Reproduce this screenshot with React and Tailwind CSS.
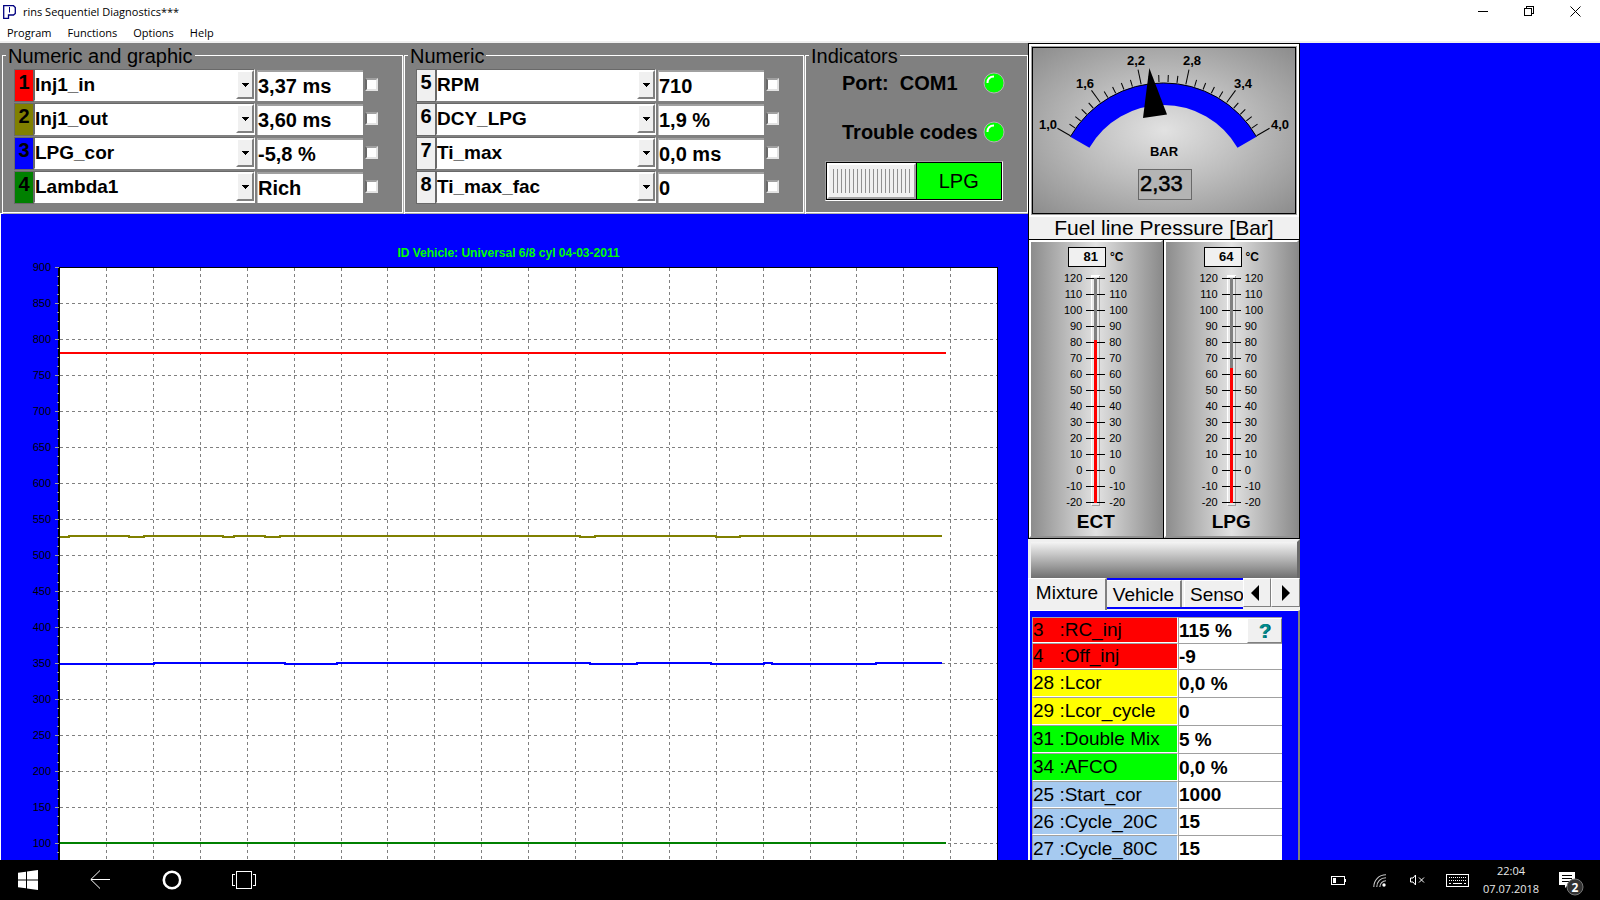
import React from "react";

const graphic = [
  { n: 1, name: "Inj1_in", value: "3,37 ms", color: "bg-[#ff0000]" },
  { n: 2, name: "Inj1_out", value: "3,60 ms", color: "bg-[#808000]" },
  { n: 3, name: "LPG_cor", value: "-5,8 %", color: "bg-[#0000ff]" },
  { n: 4, name: "Lambda1", value: "Rich", color: "bg-[#008000]" },
];

const numeric = [
  { n: 5, name: "RPM", value: "710", color: "bg-[#f0f0f0]" },
  { n: 6, name: "DCY_LPG", value: "1,9 %", color: "bg-[#f0f0f0]" },
  { n: 7, name: "Ti_max", value: "0,0 ms", color: "bg-[#f0f0f0]" },
  { n: 8, name: "Ti_max_fac", value: "0", color: "bg-[#f0f0f0]" },
];

const red = "bg-[#ff0000] h-[26px] border-l-[#a0a0a0]";
const yellow = "bg-[#ffff00] h-[28px] border-l-[#ffff00]";
const green = "bg-[#00ff00] h-[28px] border-l-[#00ff00]";
const sky = "bg-[#a6caf0] h-[27px] border-l-[#a0a0a0]";

const mixture = [
  { id: "3", name: "RC_inj", value: "115 %", tone: red, help: true },
  { id: "4", name: "Off_inj", value: "-9", tone: red },
  { id: "28", name: "Lcor", value: "0,0 %", tone: yellow },
  { id: "29", name: "Lcor_cycle", value: "0", tone: yellow },
  { id: "31", name: "Double Mix", value: "5 %", tone: green },
  { id: "34", name: "AFCO", value: "0,0 %", tone: green },
  { id: "25", name: "Start_cor", value: "1000", tone: sky },
  { id: "26", name: "Cycle_20C", value: "15", tone: sky },
  { id: "27", name: "Cycle_80C", value: "15", tone: sky },
];

const raised = "border border-t-white border-l-white border-r-[#808080] border-b-[#808080]";

function TitleBar() {
  return (
    <header className="flex h-[23px] shrink-0 items-center bg-white">
      <svg className="ml-[3px] h-[14px] w-[13px]" viewBox="0 0 13 14" fill="none" stroke="#000080">
        <path d="M.7 13.3V.7H10.5L12.3 2.500V8.500L10.5 10H5.500V13.300Z" fill="#fff" strokeWidth="1.3" />
        <path d="M6.500 2V7.500" strokeWidth="1" />
      </svg>
      <h1 className="ml-[7px] text-[11px] leading-4">rins Sequentiel Diagnostics***</h1>
      <div className="mr-[2px] ml-auto flex">
        <button aria-label="Minimize" className="flex h-[21px] w-[45px] items-center justify-center">
          <svg className="size-[11px]" viewBox="0 0 11 11" stroke="#000" shapeRendering="crispEdges"><path d="M0 5.5H10" /></svg>
        </button>
        <button aria-label="Restore" className="flex h-[21px] w-[46px] items-center justify-center">
          <svg className="size-[11px]" viewBox="0 0 11 11" fill="none" stroke="#000" shapeRendering="crispEdges"><path d="M.5 2.5H7.5V9.5H.5ZM2.5 2.5V.5H9.5V7.5H7.5" /></svg>
        </button>
        <button aria-label="Close" className="flex h-[21px] w-[46px] items-center justify-center">
          <svg className="size-[11px]" viewBox="0 0 11 11" stroke="#000"><path d="M.5 .5L10.5 10.5M10.5 .5L.5 10.5" /></svg>
        </button>
      </div>
    </header>
  );
}

function Channel({ row }) {
  const id = "channel-" + row.n;
  return (
    <div className="flex h-[34px] items-start text-black">
      <label htmlFor={id} className={"h-[33px] w-5 shrink-0 border border-[#696969] text-center text-xl leading-6 font-bold " + row.color}>
        {row.n}
      </label>
      <div className="relative h-8 min-w-0 flex-1 border border-t-[#696969] border-l-[#696969] border-r-white border-b-white bg-white">
        <select id={id} className="block h-[29px] w-full appearance-none bg-white text-[19px] leading-7 font-bold outline-none">
          <option>{row.name}</option>
        </select>
        <span className="pointer-events-none absolute top-0 right-0 flex h-[29px] w-[18px] items-center justify-center border-2 border-t-white border-l-white border-r-[#808080] border-b-[#808080] bg-[#f0f0f0]">
          <svg className="h-1 w-[7px]" viewBox="0 0 7 4" shapeRendering="crispEdges"><path d="M0 0H7L3.5 4Z" /></svg>
        </span>
      </div>
      <input aria-label={row.name + " value"} defaultValue={row.value} className="mt-[1px] ml-[2px] h-[31px] w-[106px] shrink-0 border-t-2 border-l border-t-[#a0a0a0] border-l-[#c0c0c0] bg-white text-xl leading-6 font-bold outline-none" />
      <input type="checkbox" aria-label={"Select " + row.name} className="mt-[9px] ml-[2px] size-[13px] shrink-0 appearance-none border-2 border-t-[#a0a0a0] border-l-[#696969] border-r-[#e3e3e3] border-b-[#e3e3e3] bg-white" />
    </div>
  );
}

const group = "min-w-0 border border-white pb-[6px] shadow-[1px_1px_0_#b0b0b0]";

function ChannelGroup({ title, rows }) {
  return (
    <fieldset className={group + " pr-6 pl-[11px]"}>
      <legend className="-ml-2 px-[2px] pt-px text-xl leading-6">{title}</legend>
      <div className="pt-px">
        {rows.map((r) => (
          <Channel key={r.n} row={r} />
        ))}
      </div>
    </fieldset>
  );
}

function Led() {
  return (
    <svg className="-mr-[2px] size-[22px] shrink-0" viewBox="0 0 22 22">
      <circle cx="11" cy="11" r="10" fill="#00ff00" stroke="#b4b4b4" />
      <path d="M4.5 11C4.5 7 7 4.5 11 4.5" fill="none" stroke="#fff" strokeWidth="2" />
    </svg>
  );
}

function Indicators() {
  return (
    <fieldset className={group + " pr-6 pl-[19px]"}>
      <legend className="-ml-4 px-[2px] pt-px text-xl leading-6">Indicators</legend>
      <div className="mt-px flex h-7 items-center justify-between pl-[17px] text-xl font-bold">
        <span className="whitespace-pre">Port:  COM1</span>
        <Led />
      </div>
      <div className="mt-[21px] flex h-7 items-center justify-between pl-[17px] text-xl font-bold">
        <span>Trouble codes</span>
        <Led />
      </div>
      <button aria-label="Fuel: LPG" className="mt-[15px] flex h-10 w-full border border-t-[#a0a0a0] border-l-[#a0a0a0] border-r-white border-b-white bg-black p-px text-xl">
        <span className="flex h-full flex-1 items-center justify-center border-2 border-t-white border-l-white border-r-[#a0a0a0] border-b-[#a0a0a0] bg-[#f0f0f0]">
          <svg className="h-6 w-[78px]" viewBox="0 0 78 24" shapeRendering="crispEdges">
            {Array.from({ length: 20 }, (_, i) => (
              <rect key={i} x={1 + i * 4} y="0" width="1" height="24" fill="#909090" />
            ))}
          </svg>
        </span>
        <span className="ml-px flex h-full flex-1 items-center justify-center bg-[#00ff00]">LPG</span>
      </button>
    </fieldset>
  );
}

const oliveLine = "M0 269H9V268H69V269H84V268H163V269H174V268H205V269H220V268H520V269H535V268H656V269H680V268H882";
const blueLine = "M0 396H94V395H225V396H277V395H530V396H577V395H651V396H704V395H712V396H816V395H882";

function Chart() {
  return (
    <section className="ml-px flex-1 overflow-hidden bg-[#0000ff]">
      <h2 className="mt-[31px] text-center text-xs leading-4 font-bold text-[#00ff00]">
        <span className="pr-3">ID Vehicle: Universal 6/8 cyl 04-03-2011</span>
      </h2>
      <div className="mt-[6px] mr-[30px] flex">
        <div className="-mt-[12px] w-[50px] shrink-0 text-right text-[11px] text-black">
          {Array.from({ length: 17 }, (_, i) => (
            <div key={i} className="h-9 leading-6">{900 - i * 50}</div>
          ))}
        </div>
        <svg className="ml-1 h-[648px] w-[5px] shrink-0" viewBox="0 0 5 648" shapeRendering="crispEdges">
          <rect x="3" width="2" height="648" fill="#000" />
          {Array.from({ length: 72 }, (_, i) => (
            <rect key={i} x={i % 4 ? 2 : 0} y={i * 9} width={i % 4 ? 2 : 4} height="1" fill="#a0a0a0" />
          ))}
        </svg>
        <svg className="h-[648px] min-w-0 flex-1 border-t border-r border-black bg-white" viewBox="0 0 937 647" preserveAspectRatio="none" fill="none" shapeRendering="crispEdges">
          <g stroke="#808080" strokeDasharray="3 3">
            {Array.from({ length: 17 }, (_, i) => (
              <path key={i} d={"M0 " + (i * 36 + 35.5) + "H937"} />
            ))}
            {Array.from({ length: 19 }, (_, i) => (
              <path key={i} d={"M" + (Math.round(i * 46.9) + 46.5) + " 0V647"} />
            ))}
          </g>
          <g strokeWidth="2">
            <path d="M0 85H886" stroke="#ff0000" />
            <path d={oliveLine} stroke="#808000" />
            <path d={blueLine} stroke="#0000ff" />
            <path d="M0 575H886" stroke="#008000" />
          </g>
        </svg>
      </div>
    </section>
  );
}

const dialLabels = [
  ["1,0", 15, 81],
  ["1,6", 52, 40],
  ["2,2", 103, 17],
  ["2,8", 159, 17],
  ["3,4", 210, 40],
  ["4,0", 247, 81],
];

function Gauge() {
  return (
    <figure className="border border-b-0 border-black bg-[#f0f0f0]">
      <div className="border-2 border-white bg-white">
        <div className="border border-[#a0a0a0]">
          <svg className="block h-[167px] w-full border border-black bg-[radial-gradient(ellipse_at_center,#e2e2e2_0%,#bdbdbd_45%,#8c8c8c_100%)]" viewBox="0 0 262 165">
            <path d="M37.3 88.7A107.5 107.5 0 0 1 223.5 88.7L204.5 99.7A85.5 85.5 0 0 0 56.4 99.7Z" fill="#0000ff" />
            <path d="M37.3 88.7A107.5 107.5 0 0 1 223.5 88.7" fill="none" stroke="#000" />
            {Array.from({ length: 26 }, (_, i) => (
              <path key={i} d={i % 5 ? "M130.5 34V27" : "M130.5 34V19"} transform={"rotate(" + (-60 + i * 4.8) + " 130.5 141.5)"} stroke="#000" />
            ))}
            <path d="M116.3 20L110 70L134 66.5Z" fill="#000" />
            <g fontSize="13" fontWeight="bold" textAnchor="middle">
              {dialLabels.map(([t, x, y]) => (
                <text key={t} x={x} y={y}>{t}</text>
              ))}
              <text x="131" y="108">BAR</text>
            </g>
            <rect x="105.5" y="121.5" width="53" height="30" fill="#b4b4b4" stroke="#696969" />
            <text x="107" y="143" fontSize="22" stroke="#000" strokeWidth=".5">2,33</text>
          </svg>
        </div>
      </div>
      <figcaption className="h-[22px] text-center text-[21px] leading-[22px] whitespace-nowrap">Fuel line Pressure [Bar]</figcaption>
    </figure>
  );
}

function Thermometer({ name, value, className }) {
  const labels = Array.from({ length: 15 }, (_, i) => 120 - i * 10);
  const top = 8 + Math.round((120 - value) * 1.6);
  const side = "w-6 text-[11px] leading-4";
  return (
    <div className={"border border-black " + className}>
      <div className="flex h-[298px] flex-col items-center border-2 border-t-white border-l-white border-r-[#8a8a8a] border-b-[#909090] bg-[linear-gradient(90deg,#8c8c8c,#e2e2e2_50%,#8c8c8c)] pt-[5px]">
        <div className="flex items-center gap-1 text-[13px] leading-4 font-bold">
          <output className="h-5 w-[38px] border border-black bg-[#f0f0f0] pr-[7px] text-right leading-[18px]">{value}</output>
          <span className="text-xs">°C</span>
        </div>
        <div className="mt-[3px] flex gap-1">
          <div className={side + " text-right"}>
            {labels.map((l) => <div key={l}>{l}</div>)}
          </div>
          <svg className="h-60 w-[19px]" viewBox="0 0 19 240" shapeRendering="crispEdges">
            <rect x="5" y="5" width="9" height="230" fill="#e8e8e8" />
            <rect x="5" y="5" width="1" height="230" fill="#fff" />
            <rect x="5" y="5" width="9" height="2" fill="#fff" />
            <rect x="13" y="6" width="1" height="230" fill="#a0a0a0" />
            <rect x="6" y="235" width="8" height="1" fill="#a0a0a0" />
            {labels.map((l, i) => (
              <rect key={l} x="0" y={8 + i * 16} width="19" height="1" />
            ))}
            <rect x="8" y="8" width="3" height="225" fill="#808080" />
            <rect x="8" y={top} width="3" height={233 - top} fill="#ff0000" />
          </svg>
          <div className={side}>
            {labels.map((l) => <div key={l}>{l}</div>)}
          </div>
        </div>
        <div className="text-[19px] leading-6 font-bold">{name}</div>
      </div>
    </div>
  );
}

function Mixture() {
  return (
    <section className="flex min-h-0 flex-1 flex-col text-[19px]">
      <div role="tablist" className="flex h-[32px] items-start bg-[#f0f0f0]">
        <button role="tab" aria-selected="true" className="h-8 w-[79px] shrink-0 border-t border-r-2 border-l border-t-white border-l-white border-r-[#808080] bg-[#f0f0f0] pb-[3px] leading-6">Mixture</button>
        <div className="flex h-[31px] min-w-0 flex-1 gap-[2px] overflow-hidden border-y-2 border-[#0000ff] bg-[#f0f0f0]">
          <button role="tab" aria-selected="false" className="w-[75px] shrink-0 border-t border-r-2 border-t-white border-r-[#808080]">Vehicle</button>
          <button role="tab" aria-selected="false" className="w-20 shrink-0 border-t border-l border-white pl-[5px] text-left">Sensors</button>
        </div>
        <button aria-label="Scroll tabs left" className={"flex h-[29px] w-7 shrink-0 items-center justify-center bg-[#f0f0f0] pr-1 " + raised}>
          <svg className="h-4 w-2" viewBox="0 0 8 16"><path d="M8 0V16L0 8Z" /></svg>
        </button>
        <button aria-label="Scroll tabs right" className={"flex h-[29px] w-[29px] shrink-0 items-center justify-center bg-[#f0f0f0] " + raised}>
          <svg className="h-4 w-2" viewBox="0 0 8 16"><path d="M0 0V16L8 8Z" /></svg>
        </button>
      </div>
      <div className="min-h-0 flex-1 overflow-hidden border-t border-r-2 border-l-2 border-t-white border-l-white border-r-[#808080] bg-[#0000ff] pt-[6px] pl-[2px]">
        <table className="w-[250px] table-fixed border-separate border-spacing-0">
          <tbody>
            {mixture.map((m) => (
              <tr key={m.id}>
                <th scope="row" className={"w-[146px] border-t border-r border-b border-l border-t-[#a0a0a0] border-r-white border-b-white p-0 text-left leading-6 font-normal whitespace-pre " + m.tone}>
                  <label htmlFor={"mix-" + m.id}>{m.id.padEnd(m.id.length === 1 ? 4 : 3) + ":" + m.name}</label>
                </th>
                <td className="border-t border-l border-[#a0a0a0] bg-white p-0">
                  <div className="flex items-center">
                    <input id={"mix-" + m.id} defaultValue={m.value} className="h-[25px] min-w-0 flex-1 bg-white leading-6 font-bold outline-none" />
                    {m.help && (
                      <button aria-label="Help" className={"h-[25px] w-[35px] shrink-0 bg-[#f0f0f0] text-xl leading-5 font-bold text-[#008b8b] [text-shadow:1px_0_0_#005060] " + raised}>?</button>
                    )}
                  </div>
                </td>
              </tr>
            ))}
          </tbody>
        </table>
      </div>
    </section>
  );
}

function Taskbar() {
  return (
    <footer className="flex h-10 shrink-0 items-center bg-black text-white">
      <button aria-label="Start" className="flex h-10 w-14 items-center justify-center">
        <svg className="size-5" viewBox="0 0 20 20" fill="#fff"><path d="M0 2.8L8 1.7V9.5H0ZM9 1.5L20 0V9.5H9ZM0 10.5H8V18.3L0 17.2ZM9 10.5H20V20L9 18.5Z" /></svg>
      </button>
      <button aria-label="Back" className="ml-4 flex h-10 w-14 items-center justify-center">
        <svg className="size-5" viewBox="0 0 20 20" fill="none" stroke="#fff"><path d="M10 .5L.8 9.5L10 18.5M1 9.5H20" /></svg>
      </button>
      <button aria-label="Search" className="ml-4 flex h-10 w-14 items-center justify-center">
        <svg className="size-5" viewBox="0 0 20 20" fill="none"><circle cx="10" cy="10" r="8.2" stroke="#fff" strokeWidth="2.6" /></svg>
      </button>
      <button aria-label="Task view" className="ml-4 flex h-10 w-14 items-center justify-center">
        <svg className="h-5 w-6" viewBox="0 0 24 20" fill="none" stroke="#fff" shapeRendering="crispEdges"><path d="M4.5 1.5H19.5V18.5H4.5ZM3 4.5H.5V15.5H3M21 4.5H23.5V15.5H21" /></svg>
      </button>
      <div className="mr-4 ml-auto flex items-center">
        <svg aria-label="Battery" className="mr-[26px] h-[9px] w-4" viewBox="0 0 16 9" fill="none" stroke="#fff" shapeRendering="crispEdges"><path d="M.5 .5H13.5V8.5H.5ZM14.5 3V6" /><path d="M2 2H5V7H2Z" fill="#fff" stroke="none" /></svg>
        <svg aria-label="Wi-Fi" className="mr-[24px] h-[13px] w-[13px]" viewBox="0 0 13 13" fill="none" stroke="#c8c8c8" strokeWidth="1.1"><path d="M.8 13C.8 6 6 .8 13 .8M3.8 13C3.8 7.500 7.500 3.800 13 3.800M6.800 13C6.800 9.500 9.500 6.800 13 6.800" /><circle cx="11" cy="11" r="1.700" fill="#fff" stroke="none" /></svg>
        <svg aria-label="Muted" className="mr-[21px] h-3 w-[15px]" viewBox="0 0 15 12" fill="none" stroke="#fff"><path d="M.5 4H3L5.500 1V11L3 8H.5ZM9 3.500L14 8.500M14 3.500L9 8.500" /></svg>
        <svg aria-label="Keyboard" className="mr-[14px] h-[13px] w-[23px]" viewBox="0 0 23 13" fill="none" stroke="#fff" shapeRendering="crispEdges"><path d="M.5 .5H22.500V12.500H.5Z" /><path d="M3 3.500H20M3 6.500H20" strokeDasharray="1 1" /><path d="M3 9.500H5M7 9.500H16M18 9.500H20" /></svg>
        <time className="w-[56px] text-center text-[11px] leading-[18px] text-[#e8e8e8]">22:04<br />07.07.2018</time>
        <svg aria-label="2 notifications" className="ml-[20px] h-8 w-[25px]" viewBox="0 -8 25 32">
          <path d="M0 0H16V13H9L6 16V13H0Z" fill="#fff" />
          <path d="M3 3.500H13M3 6.500H13M3 9.500H10" stroke="#000" />
          <circle cx="16" cy="15" r="8" fill="#333" stroke="#777" />
          <text x="16" y="19.500" fontSize="12" fontWeight="bold" textAnchor="middle" fill="#fff">2</text>
        </svg>
      </div>
    </footer>
  );
}

export default function App() {
  return (
    <div className="flex h-screen flex-col overflow-hidden bg-[#0000ff] font-[Open_Sans,sans-serif] text-black">
      <TitleBar />
      <nav className="flex h-5 shrink-0 items-center gap-4 border-b-2 border-[#f0f0f0] bg-white pt-px pl-[7px] text-[11px] leading-4">
        <button>Program</button>
        <button>Functions</button>
        <button>Options</button>
        <button>Help</button>
      </nav>
      <main className="flex min-h-0 flex-1 font-[Liberation_Sans,sans-serif]">
        <div className="flex min-w-0 flex-[257] flex-col bg-white">
          <div className="grid h-[171px] shrink-0 grid-cols-[minmax(0,401fr)_minmax(0,400fr)_minmax(0,223fr)] gap-px border-b border-white bg-[#808080] pl-[2px]">
            <ChannelGroup title="Numeric and graphic" rows={graphic} />
            <ChannelGroup title="Numeric" rows={numeric} />
            <Indicators />
          </div>
          <Chart />
        </div>
        <aside className="flex w-[272px] shrink-0 flex-col">
          <Gauge />
          <div className="flex h-[300px] shrink-0">
            <Thermometer name="ECT" value={81} className="flex-[135]" />
            <Thermometer name="LPG" value={64} className="flex-[137] border-l-0" />
          </div>
          <div className="h-[39px] shrink-0 border-[3px] border-b-0 border-t-[#f0f0f0] border-l-[#f0f0f0] border-r-[#696969] bg-[linear-gradient(180deg,#f4f4f4,#707070)]" />
          <Mixture />
        </aside>
        <div className="flex-[75]" />
      </main>
      <Taskbar />
    </div>
  );
}
